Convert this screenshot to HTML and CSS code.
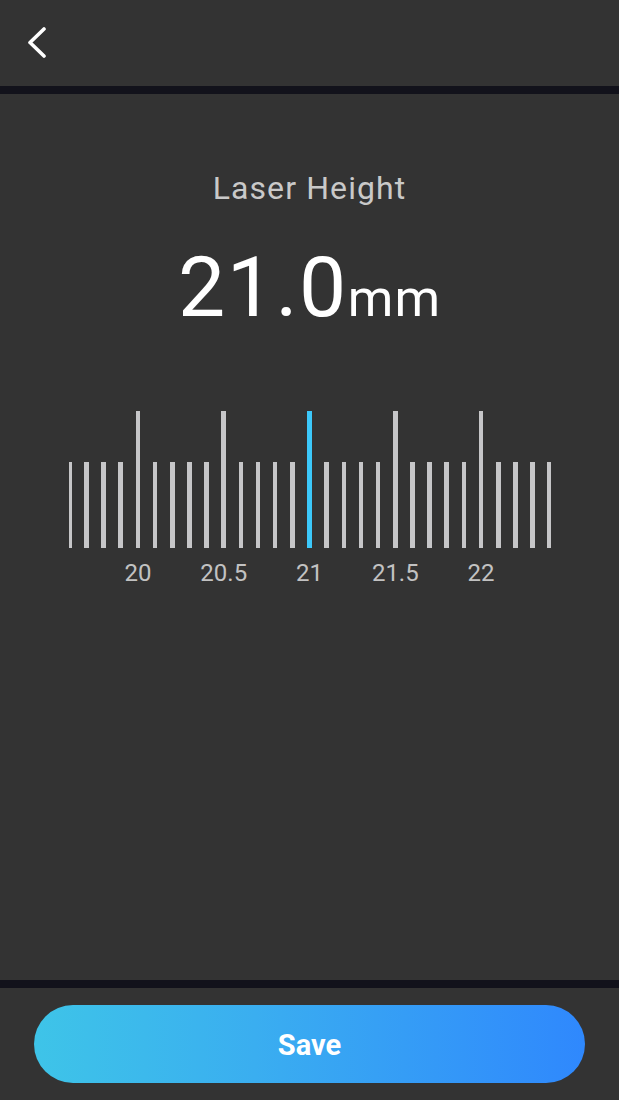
FILE: index.html
```html
<!DOCTYPE html>
<html lang="en">
<head>
    <meta charset="UTF-8">
    <meta name="viewport" content="width=device-width, initial-scale=1.0">
    <title>Laser Height</title>
    <link rel="stylesheet" href="styles.css">
</head>
<body>

    <header class="top-bar">
        <button type="button" class="back-button" aria-label="Back">
            <svg width="24" height="36" viewBox="0 0 24 36">
                <polyline points="16,2 2,15.5 16,29" fill="none" stroke="#ffffff" stroke-width="3.6" stroke-linecap="round" stroke-linejoin="round"/>
            </svg>
        </button>
    </header>

    <main class="height-panel">
        <h2 class="panel-title">Laser Height</h2>
        <div class="height-value">21.0<span class="unit">mm</span></div>

        <div class="ruler">
            <div class="ruler-track" id="rulerTrack"></div>
        </div>
    </main>

    <footer class="bottom-bar">
        <button type="button" class="save-button">Save</button>
    </footer>

    <script>
        // build the ruler: one tick per 0.1 mm, long tick + label every 0.5 mm
        const track = document.getElementById('rulerTrack');
        const current = 210;
        for (let v = 195; v <= 225; v++) {
            const tick = document.createElement('div');
            tick.className = 'tick';
            const line = document.createElement('span');
            line.className = 'tick-line';
            if (v % 5 === 0) line.classList.add('long');
            if (v === current) line.classList.add('active');
            tick.appendChild(line);
            const label = document.createElement('span');
            label.className = 'tick-label';
            if (v % 5 === 0 && v !== 195 && v !== 225) {
                label.textContent = v % 10 === 0 ? String(v / 10) : (v / 10).toFixed(1);
            }
            tick.appendChild(label);
            track.appendChild(tick);
        }
    </script>
</body>
</html>
```

FILE: styles.css
```css
body {
    font-family: Roboto, "Liberation Sans", sans-serif;
    margin: 0;
    padding: 0;
    height: 1100px;
    display: flex;
    flex-direction: column;
    background-color: #333333;
    color: #ffffff;
}

.top-bar {
    height: 86px;
    border-bottom: 8px solid #12121b;
    display: flex;
    align-items: center;
    padding-left: 28px;
}

.back-button {
    background: none;
    border: none;
    padding: 0;
    margin-top: 4px;
    display: flex;
    cursor: pointer;
}

.height-panel {
    flex: 1;
    display: flex;
    flex-direction: column;
    align-items: center;
    padding-top: 76px;
}

.panel-title {
    margin: 0;
    font-size: 32px;
    line-height: 36px;
    font-weight: 400;
    letter-spacing: 1.1px;
    color: #c9c9c9;
}

.height-value {
    margin-top: 40px;
    font-size: 84px;
    line-height: 84px;
    letter-spacing: 1.5px;
    color: #ffffff;
}

.unit {
    font-size: 52px;
    line-height: 1;
    letter-spacing: 1px;
}

.ruler {
    margin-top: 81px;
    width: 482px;
    overflow: hidden;
}

.ruler-track {
    display: flex;
    justify-content: center;
}

.tick {
    flex: 0 0 17.16px;
    min-width: 0;
    display: flex;
    flex-direction: column;
    align-items: center;
}

.tick-line {
    width: 4.6px;
    height: 86px;
    margin-top: 51px;
    background-color: #c6c6c8;
}

.tick-line.long {
    height: 137px;
    margin-top: 0;
}

.tick-line.active {
    background-color: #3cc8fa;
}

.tick-label {
    margin-top: 11px;
    height: 28px;
    font-size: 24px;
    line-height: 28px;
    white-space: nowrap;
    color: #c2c2c2;
}

.bottom-bar {
    border-top: 8px solid #12121b;
    padding: 17px 34px;
}

.save-button {
    width: 100%;
    height: 78px;
    padding-top: 2px;
    border: none;
    border-radius: 39px;
    background: linear-gradient(90deg, #3ec4e8 0%, #3aaef0 40%, #2f88fd 100%);
    color: #ffffff;
    font-family: Roboto, "Liberation Sans", sans-serif;
    font-size: 29px;
    font-weight: 700;
    cursor: pointer;
}
```
